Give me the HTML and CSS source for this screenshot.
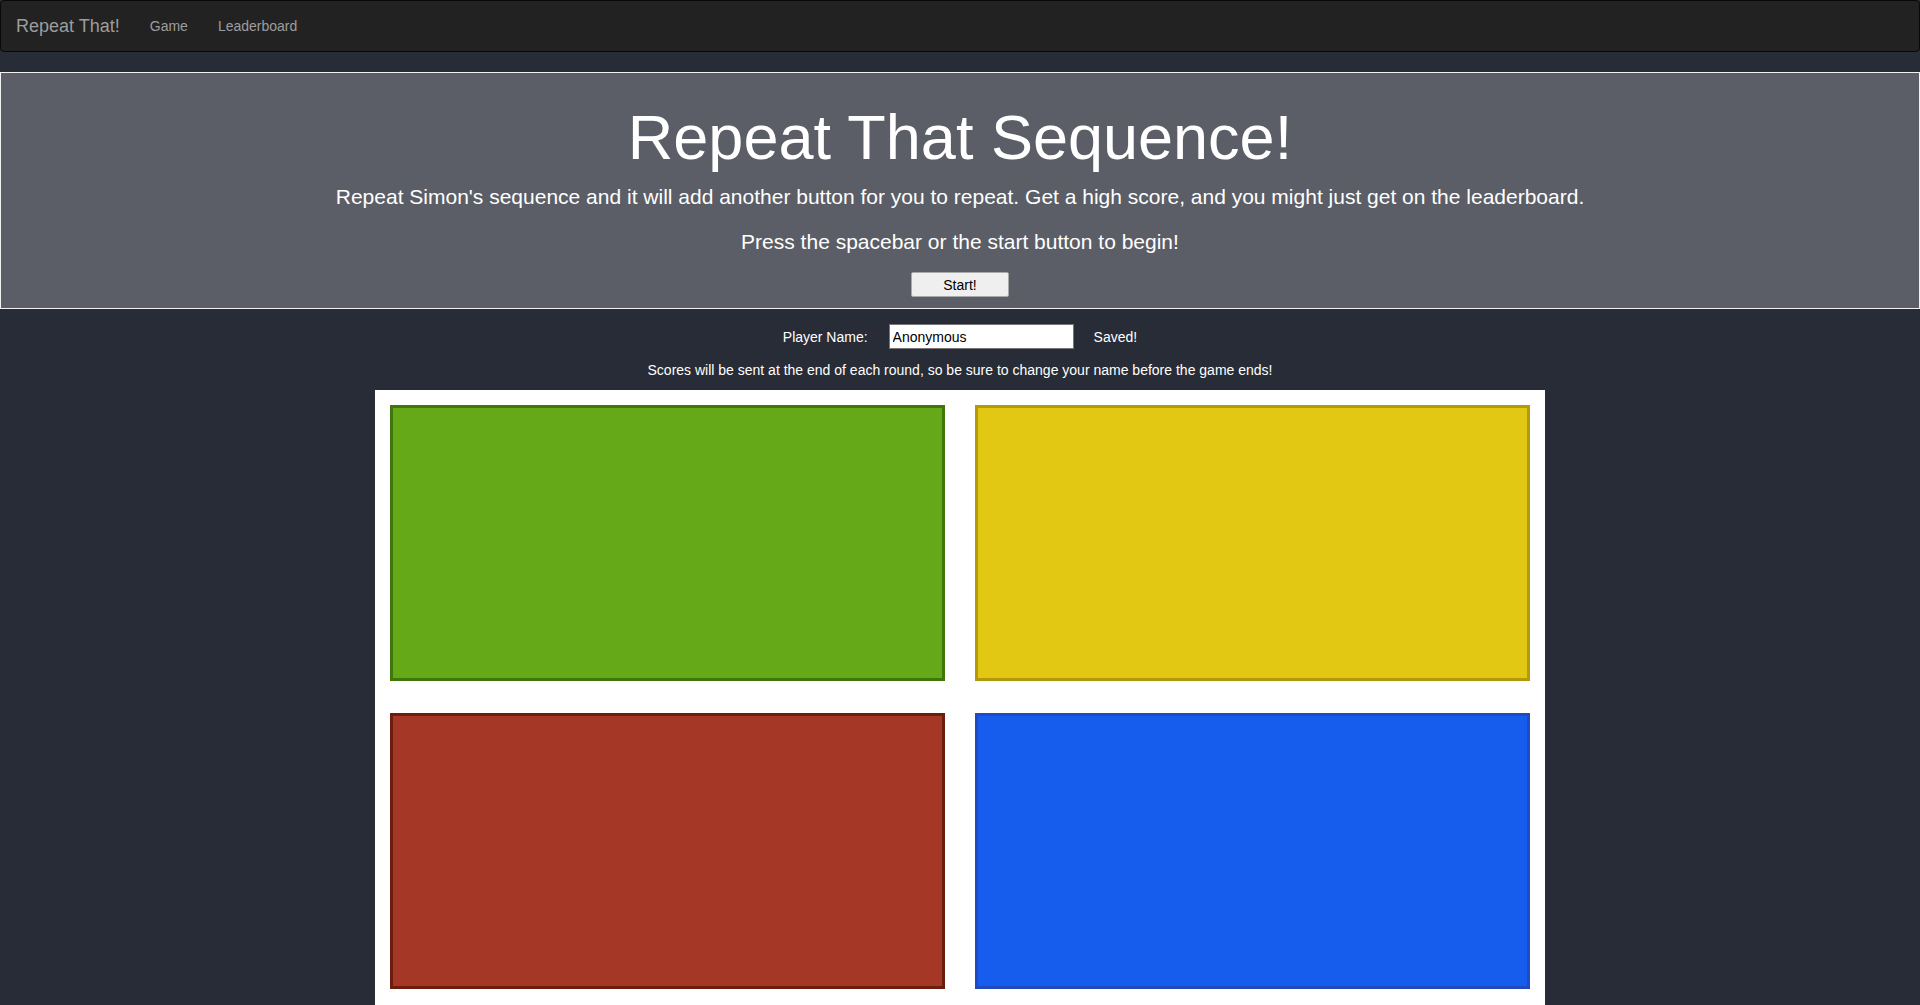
FILE: index.html
```html
<!DOCTYPE html>
<html lang="en">
<head>
<meta charset="utf-8">
<title>Repeat That!</title>
<link rel="stylesheet" href="styles.css">
</head>
<body>
<nav class="navbar">
  <a class="brand" href="#">Repeat That!</a>
  <a class="nav-link" href="#">Game</a>
  <a class="nav-link" href="#">Leaderboard</a>
</nav>
<section class="jumbotron">
  <h1 class="title">Repeat That Sequence!</h1>
  <p class="lead">Repeat Simon's sequence and it will add another button for you to repeat. Get a high score, and you might just get on the leaderboard.</p>
  <p class="lead">Press the spacebar or the start button to begin!</p>
  <button class="start-btn" type="button">Start!</button>
</section>
<div class="player-row">
  <label class="player-label" for="name">Player Name:</label>
  <input class="player-input" id="name" type="text" value="Anonymous">
  <span class="saved">Saved!</span>
</div>
<p class="notice">Scores will be sent at the end of each round, so be sure to change your name before the game ends!</p>
<main class="board">
  <div class="pad pad-green"></div>
  <div class="pad pad-yellow"></div>
  <div class="pad pad-red"></div>
  <div class="pad pad-blue"></div>
</main>
</body>
</html>
```

FILE: styles.css
```css
html, body {
  margin: 0;
  padding: 0;
}
body {
  background: #282c36;
  font-family: "Liberation Sans", Arial, sans-serif;
  font-size: 14px;
  line-height: 20px;
  color: #ffffff;
}
.navbar {
  display: flex;
  align-items: center;
  height: 50px;
  background: #222222;
  border: 1px solid #080808;
  border-radius: 4px;
  margin-bottom: 20px;
}
.brand {
  font-size: 18px;
  line-height: 20px;
  padding: 15px;
  color: #9d9d9d;
  text-decoration: none;
}
.nav-link {
  font-size: 14px;
  line-height: 20px;
  padding: 15px;
  color: #9d9d9d;
  text-decoration: none;
}
.jumbotron {
  background: #5b5e66;
  border: 1px solid #f2f2f2;
  padding: 30px 15px 11px;
  text-align: center;
}
.title {
  font-size: 63px;
  line-height: 1.1;
  font-weight: 400;
  margin: 0 0 10px;
}
.lead {
  font-size: 21px;
  line-height: 30px;
  margin: 0 0 15px;
}
.start-btn {
  width: 98px;
  height: 25px;
  background: #efefef;
  border: 1px solid #a9a9a9;
  border-radius: 2px;
  font-family: "Liberation Sans", Arial, sans-serif;
  font-size: 14px;
  color: #000;
  padding: 0;
  vertical-align: top;
}
.player-row {
  display: flex;
  justify-content: center;
  align-items: center;
  margin-top: 15px;
  height: 25px;
}
.player-label {
  margin-right: 21px;
}
.player-input {
  box-sizing: border-box;
  width: 185px;
  height: 25px;
  border: 1px solid #767676;
  padding: 1px 3px;
  font-family: "Liberation Sans", Arial, sans-serif;
  font-size: 14px;
  color: #000;
  margin-right: 20px;
}
.notice {
  margin: 11px 0 10px;
  text-align: center;
  font-size: 14px;
  line-height: 20px;
}
.board {
  width: 1170px;
  margin: 0 auto;
  background: #ffffff;
  box-sizing: border-box;
  padding: 15px 15px 16px;
  display: grid;
  grid-template-columns: 555px 555px;
  column-gap: 30px;
  row-gap: 32px;
}
.pad {
  box-sizing: border-box;
  height: 276px;
  border: 3px solid;
}
.pad-green { background: #65a818; border-color: #3f780a; }
.pad-yellow { background: #e2c812; border-color: #b39a0c; }
.pad-red { background: #a53727; border-color: #6c1d0c; }
.pad-blue { background: #165ced; border-color: #2049c2; }
```
